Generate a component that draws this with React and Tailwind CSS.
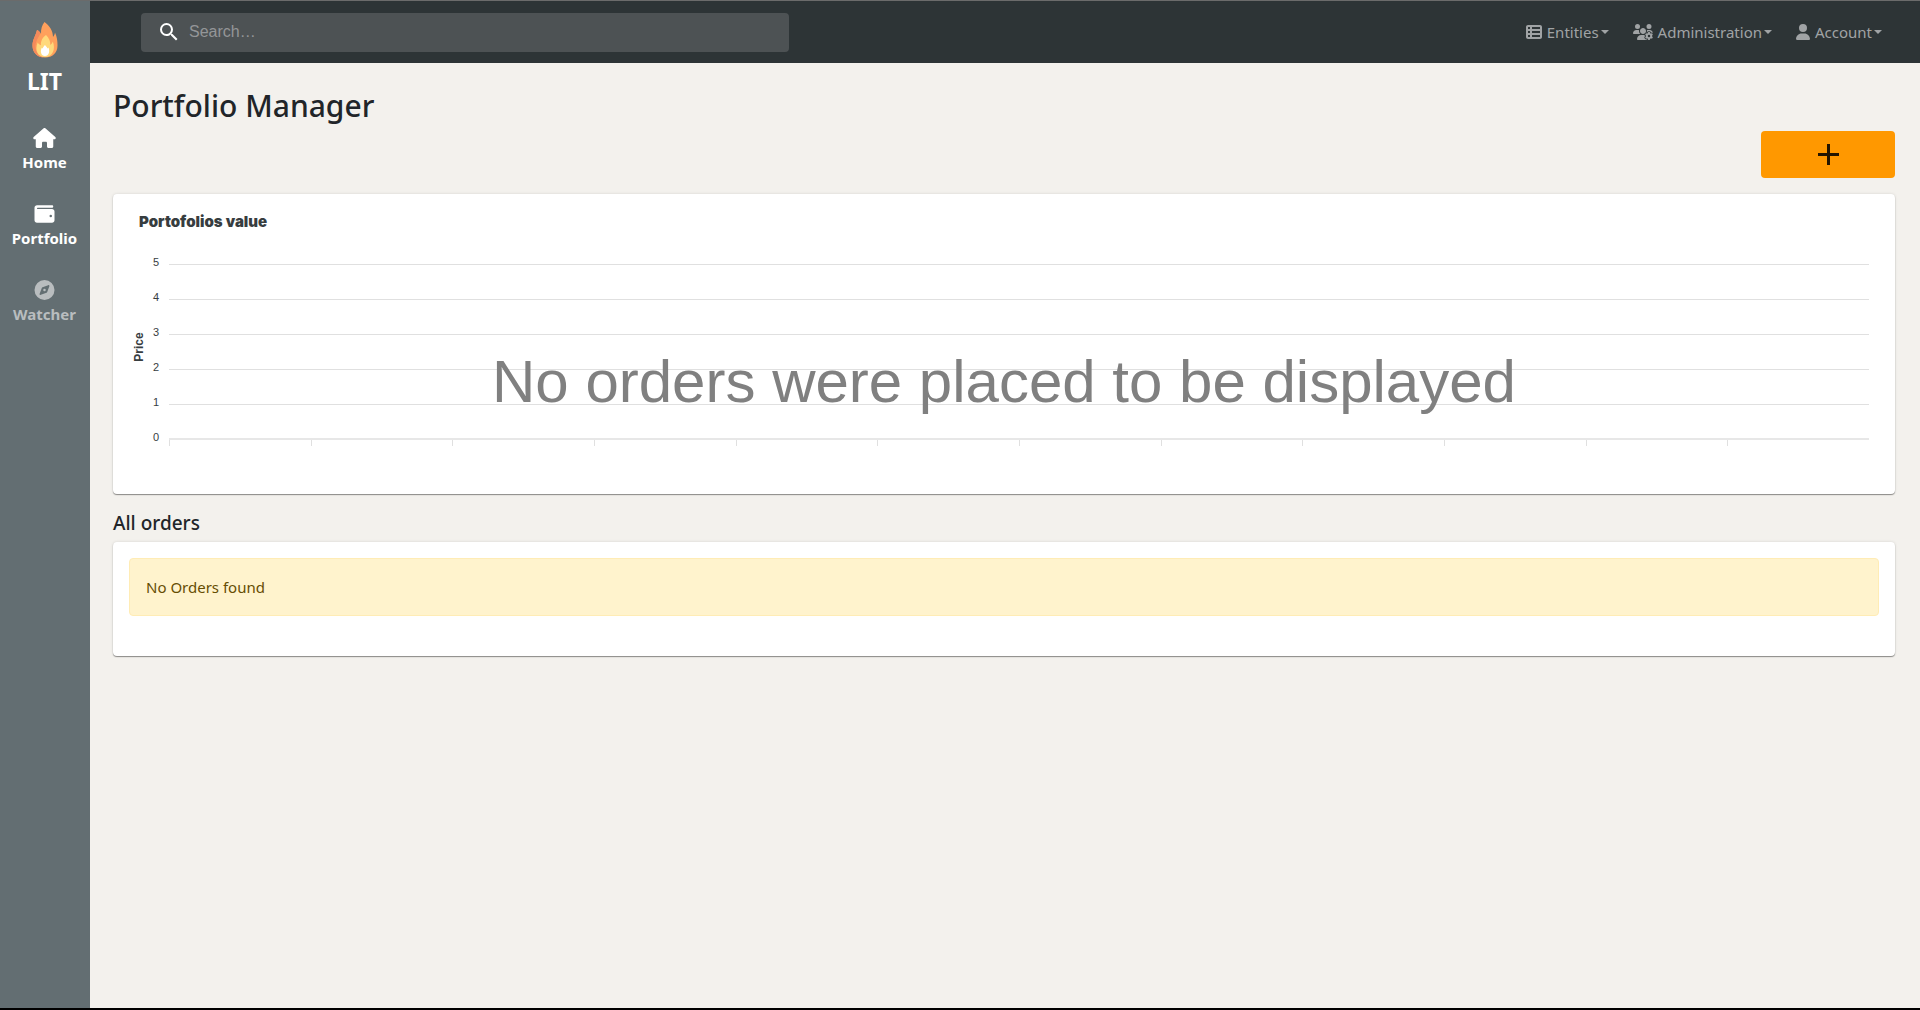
import React from "react";
import { FaHouse, FaWallet, FaCompass, FaTableList, FaUsersGear, FaUser } from "react-icons/fa6";
import { MdSearch } from "react-icons/md";

const card = "rounded bg-white shadow-[0_1px_1px_rgba(0,0,0,0.4),0_0_3px_rgba(0,0,0,0.12)]";
const values = [5, 4, 3, 2, 1];
const ticks = Array.from({ length: 12 }, (_, i) => i);

function Flame() {
  return (
    <svg viewBox="0 0 26 36" className="h-9 w-[26px]" aria-hidden="true">
      <path fill="#ffa05c" d="M12.5 0c5 3.500 8.500 9 8.500 15 1-1.200 1.800-2.800 2-4.500C25 15 25.500 19 25.500 23.500c0 7.500-5 12-12.500 12S.5 31 .5 23.500C.5 17.500 4 13 5 8c2 .8 3.300 2.300 4 4C8.800 7 10 3 12.500 0z" />
      <path fill="#f58a5b" d="M5 8c1.600.7 2.700 1.800 3.500 3.200C6 16 3.500 19.500 3.500 24.500c0 5 3 9 7.500 10.900C4.500 34.700.5 30 .5 23.500.5 17.500 4 13 5 8z" />
      <path fill="#ffd97c" d="M14 13c3 3 4.500 6 4.300 10 1.200-.8 2-2 2.500-3.500 3 7.500 0 15.500-7.800 15.500-7.500 0-10.500-7-7.300-14.500.8 1.300 2 2.300 3.300 2.800-.4-4 1.500-8 5-10.300z" />
      <path fill="#fff" d="M13 23c1 1.500 2 2 2.500 3.500l1-1c1.500 4 .5 8.500-3.500 8.500s-5-4.500-3.300-8.300l1 .8C11 25 12 24.200 13 23z" />
    </svg>
  );
}

function SideLink({ icon: Icon, label, muted }) {
  return (
    <a href="#" className={`flex h-[76px] flex-col items-center ${muted ? "text-[#b9bdbf]" : "text-white"}`}>
      <Icon className="h-5 w-[23px]" />
      <span className="mt-1 text-[15px] leading-5 font-bold">{label}</span>
    </a>
  );
}

function NavMenu({ icon: Icon, label, iconClass }) {
  return (
    <button type="button" className="flex items-center text-[15px] text-[#a0a3a5]">
      <Icon className={`mr-[5px] h-4 ${iconClass}`} />
      <span>{label}</span>
      <span className="ml-0.5 border-x-4 border-t-4 border-x-transparent border-t-[#a0a3a5]" />
    </button>
  );
}

export default function App() {
  return (
    <div className="flex min-h-screen border-t border-b-2 border-t-[#6b6b6b] border-b-black bg-[#f3f1ed] font-['Noto_Sans',sans-serif] text-[#212529]">
      <aside className="flex w-[90px] shrink-0 flex-col bg-[#636e72] pt-[21px] pr-px">
        <a href="#" className="flex flex-col items-center text-white">
          <Flame />
          <span className="mt-[7px] text-[23px] leading-8 font-bold">LIT</span>
        </a>
        <nav className="mt-[31px] flex flex-col">
          <SideLink icon={FaHouse} label="Home" />
          <SideLink icon={FaWallet} label="Portfolio" />
          <SideLink icon={FaCompass} label="Watcher" muted />
        </nav>
      </aside>
      <div className="min-w-0 flex-1">
        <header className="flex h-[62px] items-center justify-between bg-[#2d3436] pr-[38px] pl-[51px]">
          <label className="flex h-[39px] w-[648px] items-center rounded bg-[#4d5254] pl-4 text-white">
            <MdSearch className="size-6" />
            <input
              type="search"
              aria-label="Search"
              placeholder="Search…"
              className="ml-2 min-w-0 flex-1 bg-transparent font-['Liberation_Sans',sans-serif] text-base outline-none placeholder:text-[#949698]"
            />
          </label>
          <nav className="flex gap-6">
            <NavMenu icon={FaTableList} label="Entities" iconClass="w-4" />
            <NavMenu icon={FaUsersGear} label="Administration" iconClass="w-5" />
            <NavMenu icon={FaUser} label="Account" iconClass="w-3.5" />
          </nav>
        </header>
        <main className="pt-6 pr-[25px] pl-[23px]">
          <h1 className="text-[30px] leading-[38px] font-medium">Portfolio Manager</h1>
          <div className="mt-1.5 flex justify-end">
            <button type="button" aria-label="Add portfolio" className="flex h-[47px] w-[134px] items-center justify-center rounded bg-[#ff9800] text-[#231500]">
              <svg viewBox="0 0 21 21" className="size-[21px]" fill="none" stroke="currentColor" strokeWidth="3">
                <path d="M10.5 0v21M0 10.5h21" />
              </svg>
            </button>
          </div>
          <section className={`mt-4 h-[300px] pt-5 pr-[26px] pl-5 font-['Liberation_Sans',sans-serif] text-[#373d3f] ${card}`}>
            <h2 className="pl-1.5 font-['Inter',sans-serif] text-[15px] leading-4 font-black">Portofolios value</h2>
            <div className="relative mt-[34px] flex">
              <div className="flex w-3 items-center justify-center pb-9">
                <span className="-rotate-90 text-xs font-bold">Price</span>
              </div>
              <div className="-mt-[9px] flex w-6 flex-col pr-0.5 text-center text-[11px]">
                {[...values, 0].map((v) => (
                  <span key={v} className="h-[35px] leading-[14px]">{v}</span>
                ))}
              </div>
              <div className="min-w-0 flex-1">
                {values.map((v) => (
                  <div key={v} className="h-[35px] border-t border-[#e0e0e0]" />
                ))}
                <div className="-mt-px grid grid-cols-12 border-t-2 border-[#e7e7e7]">
                  {ticks.map((t) => (
                    <div key={t} className="h-1.5 border-l border-[#e0e0e0]" />
                  ))}
                </div>
              </div>
              <p className="absolute inset-x-0 top-[83px] pl-1.5 text-center text-[60px] leading-[70px] text-[#808080]">
                No orders were placed to be displayed
              </p>
            </div>
          </section>
          <h2 className="mt-[17px] text-[19px] leading-6 font-medium">All orders</h2>
          <section className={`mt-[7px] px-4 pt-4 pb-10 ${card}`}>
            <div role="alert" className="rounded border border-[#ffecb5] bg-[#fff3cd] p-4 text-[15px] leading-6 text-[#664d03]">
              No Orders found
            </div>
          </section>
        </main>
      </div>
    </div>
  );
}
